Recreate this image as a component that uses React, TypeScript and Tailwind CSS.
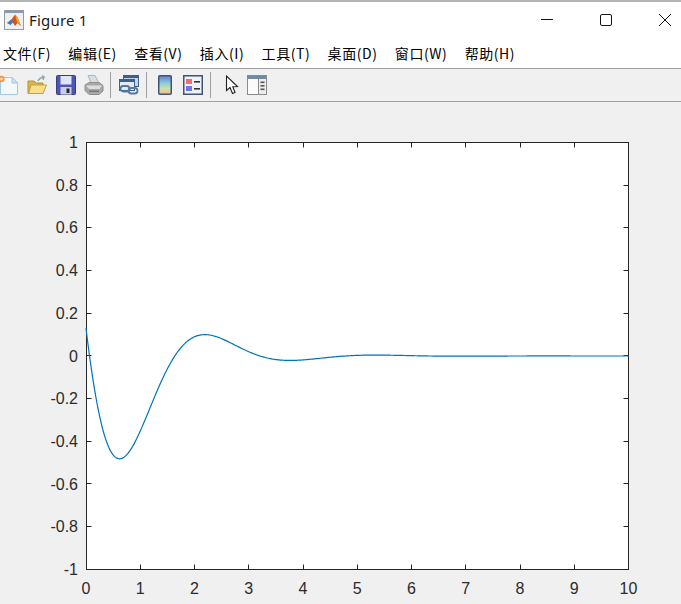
import React from "react";

const CJK = "font-['Noto_Sans_CJK_SC','Noto_Sans',sans-serif]";

const L = 86.5, R = 628.5, T = 142.5, B = 569.5;
const sx = (t: number) => 86 + ((R - 86) * t) / 10;
const sy = (v: number) => B - ((B - T) * (v + 1)) / 2;

function curve() {
  const parts: string[] = [];
  for (let i = 0; i <= 500; i++) {
    const t = i / 50;
    const v = Math.exp(-t) * Math.cos(2 * t + 1.44);
    parts.push(`${i === 0 ? "M" : "L"}${sx(t).toFixed(2)} ${sy(v).toFixed(2)}`);
  }
  return parts.join(" ");
}

const yTicks = [
  [1, "1"], [0.8, "0.8"], [0.6, "0.6"], [0.4, "0.4"], [0.2, "0.2"], [0, "0"],
  [-0.2, "-0.2"], [-0.4, "-0.4"], [-0.6, "-0.6"], [-0.8, "-0.8"], [-1, "-1"],
] as [number, string][];
const xTicks = [0, 1, 2, 3, 4, 5, 6, 7, 8, 9, 10];

function Plot() {
  const axis = "#262626";
  const label = "#2b2b2b";
  return (
    <svg width="681" height="502" viewBox="0 102 681 502" className="block">
      <rect x={L} y={T} width={R - L} height={B - T} fill="#fff" stroke={axis} strokeWidth="1" />
      {xTicks.map((t) => {
        const x = Math.min(Math.floor(sx(t)) + 0.5, R);
        return (
          <g key={t}>
            <line x1={x} x2={x} y1={B} y2={B - 5} stroke={axis} />
            <line x1={x} x2={x} y1={T} y2={T + 5} stroke={axis} />
            <text x={sx(t)} y={594} textAnchor="middle" fontSize="16" fill={label} fontFamily="'Liberation Sans',sans-serif">{t}</text>
          </g>
        );
      })}
      {yTicks.map(([v, s]) => {
        const y = Math.max(T, Math.min(Math.floor(sy(v) - 0.2) + 0.5, B));
        return (
          <g key={s}>
            <line x1={L} x2={L + 5} y1={y} y2={y} stroke={axis} />
            <line x1={R} x2={R - 5} y1={y} y2={y} stroke={axis} />
            <text x={78} y={sy(v) + 5.5} textAnchor="end" fontSize="16" fill={label} fontFamily="'Liberation Sans',sans-serif">{s}</text>
          </g>
        );
      })}
      <path d={curve()} fill="none" stroke="#0072bd" strokeWidth="1.2" />
    </svg>
  );
}

function MatlabLogo() {
  return (
    <svg width="20" height="20" viewBox="0 0 20 20" className="block">
      <rect x="0.5" y="0.5" width="19" height="19" fill="#eef0f3" stroke="#9a9a9a" />
      <rect x="1" y="1" width="18" height="2" fill="#7d9cc0" />
      <path d="M3 13 L7.5 9.5 L11 4.5 L13.5 7.5 L17 16 L13.5 13 L11 16 L8.5 12 Z" fill="#d9541a" />
      <path d="M3 13 L7.5 9.5 L9.5 12 L6.5 15 Z" fill="#3f7fb5" />
      <path d="M11 4.5 L13.5 7.5 L17 16 L13 12 Z" fill="#eda42c" />
    </svg>
  );
}

function IconNew() {
  return (
    <svg width="20" height="22" viewBox="0 0 20 22" className="block">
      <path d="M1.5 3.5 H13 L18.5 9 V20.5 H1.5 Z" fill="#f3f8fd" stroke="#a3c8e6" />
      <path d="M13 3.5 V9 H18.5 Z" fill="#cfe4f5" stroke="#a3c8e6" />
      <circle cx="2.5" cy="5" r="3.2" fill="#ee9a58" />
      <circle cx="2.5" cy="5" r="1.3" fill="#fbe3c2" />
    </svg>
  );
}

function IconOpen() {
  return (
    <svg width="20" height="20" viewBox="0 0 20 20" className="block">
      <path d="M11 6 C12 3.5 14 2.5 17 2 L15 0.5 M17 2 L16 5" fill="none" stroke="#8fa4b4" strokeWidth="1.4" />
      <path d="M1 6 H7 L9 8 H16 V18.5 H1 Z" fill="#dcb54a" stroke="#b39338" />
      <path d="M1.5 18.5 L4 10 H19.5 L16 18.5 Z" fill="#f8e08a" stroke="#c2a03e" />
    </svg>
  );
}

function IconSave() {
  return (
    <svg width="20" height="20" viewBox="0 0 20 20" className="block">
      <rect x="0.5" y="0.5" width="19" height="19" rx="1" fill="#4f55b8" stroke="#3a3d80" />
      <rect x="4.5" y="1" width="11" height="8.5" fill="#dfe5f5" />
      <rect x="4.5" y="12" width="11" height="7.5" fill="#cfd0dc" />
      <rect x="10.5" y="13.5" width="3" height="4.5" fill="#26263c" />
    </svg>
  );
}

function IconPrint() {
  return (
    <svg width="20" height="20" viewBox="0 0 20 20" className="block">
      <path d="M4 0.5 H11 L15 8 H7 Z" fill="#d7dee4" stroke="#aeb6bd" />
      <path d="M1 10 L5 7.5 H15 L19 10.5 V16 L15 19.5 H5 L1 15.5 Z" fill="#a8a8a8" stroke="#8e8e8e" />
      <path d="M2 10.5 H18 L15.5 14 H5 Z" fill="#dddddd" />
      <rect x="5" y="15.5" width="10" height="1.5" fill="#777" />
    </svg>
  );
}

function IconLink() {
  return (
    <svg width="20" height="20" viewBox="0 0 20 20" className="block">
      <rect x="4.5" y="0.5" width="15" height="11" fill="#c4d4e8" stroke="#3f5f8a" />
      <rect x="4.5" y="0.5" width="15" height="2.5" fill="#3f5f8a" />
      <rect x="0.5" y="4.5" width="15" height="11" fill="#e3eaf3" stroke="#3f5f8a" />
      <rect x="0.5" y="4.5" width="15" height="2.5" fill="#3f5f8a" />
      <rect x="1.5" y="11" width="9" height="5.5" rx="2.7" fill="none" stroke="#54789f" strokeWidth="1.8" />
      <rect x="9.5" y="13" width="9" height="5.5" rx="2.7" fill="none" stroke="#54789f" strokeWidth="1.8" />
    </svg>
  );
}

function IconColorbar() {
  return (
    <svg width="14" height="20" viewBox="0 0 14 20" className="block">
      <defs>
        <linearGradient id="cb" x1="0" y1="0" x2="0" y2="1">
          <stop offset="0" stopColor="#6a7ad0" />
          <stop offset="0.4" stopColor="#88cbdc" />
          <stop offset="0.7" stopColor="#cfe0a8" />
          <stop offset="1" stopColor="#f6b48a" />
        </linearGradient>
      </defs>
      <rect x="0.75" y="0.75" width="12.5" height="18.5" rx="1" fill="url(#cb)" stroke="#3f5578" strokeWidth="1.5" />
    </svg>
  );
}

function IconLegend() {
  return (
    <svg width="20" height="20" viewBox="0 0 20 20" className="block">
      <rect x="0.75" y="0.75" width="18.5" height="18.5" fill="#eef2f7" stroke="#3f5578" strokeWidth="1.5" />
      <rect x="3" y="4" width="6" height="5" fill="#ec7070" />
      <rect x="3" y="11" width="6" height="5" fill="#7074e4" />
      <rect x="11" y="6" width="6" height="1.6" fill="#333" />
      <rect x="11" y="13" width="6" height="1.6" fill="#333" />
    </svg>
  );
}

function IconCursor() {
  return (
    <svg width="14" height="20" viewBox="0 0 14 20" className="block">
      <path d="M1.5 1 V15.5 L5 12.5 L7.5 18.5 L10 17.5 L7.8 11.8 L12.5 11.5 Z" fill="#fff" stroke="#222" strokeWidth="1.1" />
    </svg>
  );
}

function IconPanel() {
  return (
    <svg width="20" height="20" viewBox="0 0 20 20" className="block">
      <rect x="0.5" y="0.5" width="19" height="19" fill="#eeeeee" stroke="#8a8a8a" />
      <rect x="1" y="1" width="18" height="3" fill="#6f8ba8" />
      <rect x="1" y="4" width="10" height="15" fill="#fbfbfb" />
      <rect x="11" y="4" width="1" height="15" fill="#8a8a8a" />
      <rect x="13.5" y="6.5" width="4" height="1.6" fill="#555" />
      <rect x="13.5" y="10" width="4" height="1.6" fill="#555" />
      <rect x="13.5" y="13.5" width="4" height="1.6" fill="#555" />
    </svg>
  );
}

const menus = ["文件(F)", "编辑(E)", "查看(V)", "插入(I)", "工具(T)", "桌面(D)", "窗口(W)", "帮助(H)"];

function Sep() {
  return <div className="w-px h-[26px] bg-[#a0a0a0]" />;
}

export default function App() {
  return (
    <div className="w-[681px] h-[604px] flex flex-col bg-[#f0f0f0] overflow-hidden">
      <div className="h-[2px] bg-[#b4b4b4] shrink-0" />
      <div className="h-[38px] bg-white flex items-center shrink-0 pl-[4px] pb-[2px]">
        <MatlabLogo />
        <span className="ml-[5px] text-[15px] text-[#1a1a1a] font-['Noto_Sans',sans-serif] tracking-[0.2px]">Figure 1</span>
        <div className="ml-auto flex items-center">
          <svg width="14" height="14" viewBox="0 0 14 14" className="block mr-[45px]">
            <line x1="1" x2="13" y1="6.5" y2="6.5" stroke="#111" />
          </svg>
          <svg width="14" height="14" viewBox="0 0 14 14" className="block mr-[45px]">
            <rect x="1.5" y="1.5" width="11" height="11" rx="1.5" fill="none" stroke="#111" />
          </svg>
          <svg width="14" height="14" viewBox="0 0 14 14" className="block mr-[9px]">
            <path d="M1 1 L13 13 M13 1 L1 13" stroke="#111" />
          </svg>
        </div>
      </div>
      <div className={`h-[28px] bg-white flex items-center gap-[17.4px] pl-[3px] pb-[2px] text-[14px] tracking-[0.55px] text-black shrink-0 ${CJK}`}>
        {menus.map((m) => (
          <span key={m} className="leading-none">{m}</span>
        ))}
      </div>
      <div className="h-[34px] border-y border-[#a0a0a0] flex items-center shrink-0 bg-[#f0f0f0]">
        <div className="flex items-center -ml-px">
          <IconNew />
          <div className="ml-[8px]"><IconOpen /></div>
          <div className="ml-[9px]"><IconSave /></div>
          <div className="ml-[8px]"><IconPrint /></div>
          <div className="ml-[6px]"><Sep /></div>
          <div className="ml-[8px]"><IconLink /></div>
          <div className="ml-[7px]"><Sep /></div>
          <div className="ml-[11px]"><IconColorbar /></div>
          <div className="ml-[11px]"><IconLegend /></div>
          <div className="ml-[7px]"><Sep /></div>
          <div className="ml-[14px]"><IconCursor /></div>
          <div className="ml-[8px]"><IconPanel /></div>
        </div>
      </div>
      <Plot />
    </div>
  );
}
